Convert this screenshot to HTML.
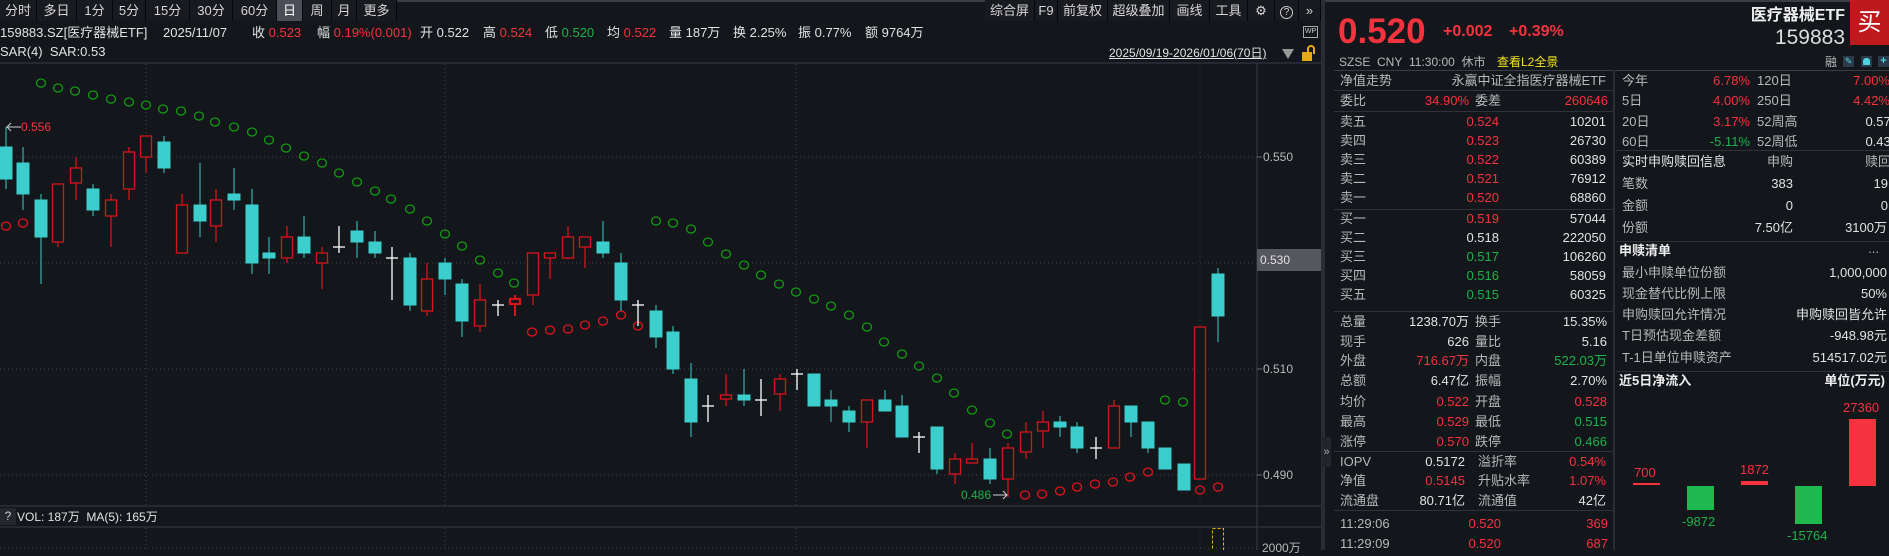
<!DOCTYPE html>
<html><head><meta charset="utf-8">
<style>
*{margin:0;padding:0;box-sizing:border-box}
body{width:1889px;height:550px;background:#13161b;overflow:hidden;position:relative;font-family:"Liberation Sans","Noto Sans CJK SC",sans-serif;color:#d8d8d8}
.p{position:absolute;white-space:nowrap;font-size:13px;line-height:16px}
.r{color:#f5333f}.g{color:#1fb24a}.w{color:#e2e2e2}.l{color:#b8b8b8}
.tb{position:absolute;top:0;height:21px;line-height:21px;font-size:13px;text-align:center;color:#d6d6d6;border-right:1px solid #05060a;background:#181a1f}
.hl{position:absolute;height:1px;background:#2f3238}
</style></head><body>
<svg width="1322" height="550" style="position:absolute;left:0;top:0">
<line x1="0" y1="1" x2="1322" y2="1" stroke="#3a3d44" stroke-width="2"/>
<line x1="0" y1="63" x2="1322" y2="63" stroke="#3a3d44"/>
<line x1="0" y1="506" x2="1322" y2="506" stroke="#3a3d44"/>
<line x1="0" y1="527" x2="1322" y2="527" stroke="#3a3d44"/>
<line x1="1257" y1="63" x2="1257" y2="550" stroke="#3a3d44"/>
<g stroke="#3c3f46" stroke-dasharray="1,3">
<line x1="0" y1="157" x2="1257" y2="157"/><line x1="0" y1="263" x2="1257" y2="263"/>
<line x1="0" y1="369" x2="1257" y2="369"/><line x1="0" y1="475" x2="1257" y2="475"/>
<line x1="0" y1="548" x2="1257" y2="548"/>
<line x1="146" y1="64" x2="146" y2="506"/><line x1="445" y1="64" x2="445" y2="506"/>
<line x1="796" y1="64" x2="796" y2="506"/><line x1="1200" y1="64" x2="1200" y2="506"/>
<line x1="146" y1="528" x2="146" y2="550"/><line x1="445" y1="528" x2="445" y2="550"/>
<line x1="796" y1="528" x2="796" y2="550"/><line x1="1200" y1="528" x2="1200" y2="550"/>
</g>
<g stroke="#6a6d74"><line x1="1257" y1="157" x2="1262" y2="157"/><line x1="1257" y1="369" x2="1262" y2="369"/><line x1="1257" y1="475" x2="1262" y2="475"/></g>
<g fill="none" stroke="#139a13" stroke-width="1.3">
<ellipse cx="41" cy="83" rx="4.5" ry="4"/><ellipse cx="58" cy="88" rx="4.5" ry="4"/><ellipse cx="75" cy="91" rx="4.5" ry="4"/><ellipse cx="93" cy="95" rx="4.5" ry="4"/><ellipse cx="111" cy="99" rx="4.5" ry="4"/><ellipse cx="129" cy="102" rx="4.5" ry="4"/><ellipse cx="146" cy="105" rx="4.5" ry="4"/><ellipse cx="163" cy="109" rx="4.5" ry="4"/><ellipse cx="181" cy="111" rx="4.5" ry="4"/><ellipse cx="199" cy="116" rx="4.5" ry="4"/><ellipse cx="215" cy="122" rx="4.5" ry="4"/><ellipse cx="234" cy="127" rx="4.5" ry="4"/><ellipse cx="252" cy="132" rx="4.5" ry="4"/><ellipse cx="269" cy="140" rx="4.5" ry="4"/><ellipse cx="286" cy="148" rx="4.5" ry="4"/><ellipse cx="304" cy="156" rx="4.5" ry="4"/><ellipse cx="322" cy="163" rx="4.5" ry="4"/><ellipse cx="339" cy="173" rx="4.5" ry="4"/><ellipse cx="357" cy="182" rx="4.5" ry="4"/><ellipse cx="375" cy="191" rx="4.5" ry="4"/><ellipse cx="391" cy="199" rx="4.5" ry="4"/><ellipse cx="410" cy="209" rx="4.5" ry="4"/><ellipse cx="427" cy="221" rx="4.5" ry="4"/><ellipse cx="445" cy="234" rx="4.5" ry="4"/><ellipse cx="462" cy="246" rx="4.5" ry="4"/><ellipse cx="480" cy="260" rx="4.5" ry="4"/><ellipse cx="498" cy="273" rx="4.5" ry="4"/><ellipse cx="514" cy="283" rx="4.5" ry="4"/>
<ellipse cx="656" cy="221" rx="4.5" ry="4"/><ellipse cx="673" cy="223" rx="4.5" ry="4"/><ellipse cx="691" cy="229" rx="4.5" ry="4"/><ellipse cx="708" cy="242" rx="4.5" ry="4"/><ellipse cx="726" cy="254" rx="4.5" ry="4"/><ellipse cx="744" cy="265" rx="4.5" ry="4"/><ellipse cx="761" cy="275" rx="4.5" ry="4"/><ellipse cx="779" cy="284" rx="4.5" ry="4"/><ellipse cx="796" cy="292" rx="4.5" ry="4"/><ellipse cx="814" cy="299" rx="4.5" ry="4"/><ellipse cx="831" cy="306" rx="4.5" ry="4"/><ellipse cx="849" cy="315" rx="4.5" ry="4"/><ellipse cx="867" cy="327" rx="4.5" ry="4"/><ellipse cx="884" cy="342" rx="4.5" ry="4"/><ellipse cx="902" cy="354" rx="4.5" ry="4"/><ellipse cx="919" cy="366" rx="4.5" ry="4"/><ellipse cx="937" cy="378" rx="4.5" ry="4"/><ellipse cx="954" cy="393" rx="4.5" ry="4"/><ellipse cx="972" cy="410" rx="4.5" ry="4"/><ellipse cx="990" cy="423" rx="4.5" ry="4"/><ellipse cx="1007" cy="434" rx="4.5" ry="4"/>
<ellipse cx="1165" cy="400" rx="4.5" ry="4"/><ellipse cx="1183" cy="402" rx="4.5" ry="4"/>
</g>
<g fill="none" stroke="#e0141e" stroke-width="1.3">
<ellipse cx="6" cy="226" rx="4.5" ry="4"/><ellipse cx="23" cy="223" rx="4.5" ry="4"/>
<ellipse cx="532" cy="332" rx="4.5" ry="4"/><ellipse cx="550" cy="330" rx="4.5" ry="4"/><ellipse cx="568" cy="329" rx="4.5" ry="4"/><ellipse cx="585" cy="325" rx="4.5" ry="4"/><ellipse cx="603" cy="321" rx="4.5" ry="4"/><ellipse cx="621" cy="315" rx="4.5" ry="4"/><ellipse cx="638" cy="326" rx="4.5" ry="4"/>
<ellipse cx="1025" cy="495" rx="4.5" ry="4"/><ellipse cx="1042" cy="494" rx="4.5" ry="4"/><ellipse cx="1060" cy="491" rx="4.5" ry="4"/><ellipse cx="1077" cy="487" rx="4.5" ry="4"/><ellipse cx="1095" cy="484" rx="4.5" ry="4"/><ellipse cx="1113" cy="482" rx="4.5" ry="4"/><ellipse cx="1130" cy="477" rx="4.5" ry="4"/><ellipse cx="1148" cy="472" rx="4.5" ry="4"/>
<ellipse cx="1200" cy="490" rx="4.5" ry="4"/><ellipse cx="1218" cy="487" rx="4.5" ry="4"/>
</g>
<g stroke="#3ccdcd" fill="#3ccdcd" stroke-width="1">
<line x1="6" y1="127" x2="6" y2="189"/><rect x="0" y="147" width="12" height="32"/>
<line x1="23" y1="147" x2="23" y2="210"/><rect x="17" y="163" width="12" height="31"/>
<line x1="41" y1="194" x2="41" y2="284"/><rect x="35" y="200" width="12" height="37"/>
<line x1="93" y1="184" x2="93" y2="216"/><rect x="87" y="189" width="12" height="21"/>
<line x1="164" y1="136" x2="164" y2="173"/><rect x="158" y="142" width="12" height="26"/>
<line x1="200" y1="163" x2="200" y2="237"/><rect x="194" y="205" width="12" height="16"/>
<line x1="234" y1="168" x2="234" y2="210"/><rect x="228" y="194" width="12" height="6"/>
<line x1="252" y1="189" x2="252" y2="274"/><rect x="246" y="205" width="12" height="58"/>
<line x1="269" y1="237" x2="269" y2="274"/><rect x="263" y="253" width="12" height="5"/>
<line x1="304" y1="216" x2="304" y2="258"/><rect x="298" y="237" width="12" height="16"/>
<line x1="357" y1="221" x2="357" y2="258"/><rect x="351" y="231" width="12" height="11"/>
<line x1="375" y1="231" x2="375" y2="258"/><rect x="369" y="242" width="12" height="11"/>
<line x1="410" y1="253" x2="410" y2="311"/><rect x="404" y="258" width="12" height="47"/>
<line x1="445" y1="258" x2="445" y2="295"/><rect x="439" y="263" width="12" height="16"/>
<line x1="462" y1="279" x2="462" y2="337"/><rect x="456" y="284" width="12" height="37"/>
<line x1="603" y1="221" x2="603" y2="258"/><rect x="597" y="242" width="12" height="11"/>
<line x1="621" y1="253" x2="621" y2="311"/><rect x="615" y="263" width="12" height="37"/>
<line x1="656" y1="305" x2="656" y2="348"/><rect x="650" y="311" width="12" height="26"/>
<line x1="673" y1="326" x2="673" y2="374"/><rect x="667" y="332" width="12" height="37"/>
<line x1="691" y1="363" x2="691" y2="437"/><rect x="685" y="379" width="12" height="43"/>
<line x1="744" y1="369" x2="744" y2="406"/><rect x="738" y="395" width="12" height="5"/>
<line x1="814" y1="374" x2="814" y2="406"/><rect x="808" y="374" width="12" height="32"/>
<line x1="831" y1="390" x2="831" y2="422"/><rect x="825" y="400" width="12" height="6"/>
<line x1="849" y1="406" x2="849" y2="432"/><rect x="843" y="411" width="12" height="11"/>
<line x1="885" y1="390" x2="885" y2="411"/><rect x="879" y="400" width="12" height="11"/>
<line x1="902" y1="395" x2="902" y2="437"/><rect x="896" y="406" width="12" height="31"/>
<line x1="937" y1="427" x2="937" y2="474"/><rect x="931" y="427" width="12" height="42"/>
<line x1="990" y1="448" x2="990" y2="484"/><rect x="984" y="459" width="12" height="20"/>
<line x1="1060" y1="416" x2="1060" y2="437"/><rect x="1054" y="422" width="12" height="5"/>
<line x1="1077" y1="422" x2="1077" y2="453"/><rect x="1071" y="427" width="12" height="21"/>
<line x1="1131" y1="406" x2="1131" y2="437"/><rect x="1125" y="406" width="12" height="16"/>
<line x1="1148" y1="422" x2="1148" y2="453"/><rect x="1142" y="422" width="12" height="26"/>
<rect x="1159" y="448" width="12" height="21"/>
<rect x="1178" y="464" width="12" height="26"/>
<line x1="1218" y1="268" x2="1218" y2="342"/><rect x="1212" y="274" width="12" height="42"/>
</g>
<g stroke="#d8141c" fill="#13161b" stroke-width="1.3">
<line x1="58" y1="184" x2="58" y2="247"/><rect x="52.5" y="184" width="11" height="58"/>
<line x1="76" y1="157" x2="76" y2="200"/><rect x="70.5" y="168" width="11" height="15"/>
<line x1="111" y1="194" x2="111" y2="247"/><rect x="105.5" y="200" width="11" height="16"/>
<line x1="129" y1="147" x2="129" y2="200"/><rect x="123.5" y="152" width="11" height="37"/>
<line x1="146" y1="136" x2="146" y2="173"/><rect x="140.5" y="136" width="11" height="21"/>
<line x1="182" y1="194" x2="182" y2="253"/><rect x="176.5" y="205" width="11" height="48"/>
<line x1="216" y1="189" x2="216" y2="242"/><rect x="210.5" y="200" width="11" height="26"/>
<line x1="287" y1="226" x2="287" y2="263"/><rect x="281.5" y="237" width="11" height="21"/>
<line x1="322" y1="247" x2="322" y2="289"/><rect x="316.5" y="253" width="11" height="10"/>
<line x1="427" y1="263" x2="427" y2="316"/><rect x="421.5" y="279" width="11" height="32"/>
<line x1="480" y1="284" x2="480" y2="332"/><rect x="474.5" y="300" width="11" height="26"/>
<line x1="515" y1="295" x2="515" y2="316" stroke-width="2"/><rect x="510" y="299" width="10" height="5" stroke-width="2.2"/>
<line x1="533" y1="253" x2="533" y2="305"/><rect x="527.5" y="253" width="11" height="42"/>
<line x1="550" y1="253" x2="550" y2="279"/><rect x="544.5" y="253" width="11" height="5"/>
<line x1="568" y1="226" x2="568" y2="258"/><rect x="562.5" y="237" width="11" height="21"/>
<line x1="585" y1="237" x2="585" y2="268"/><rect x="579.5" y="237" width="11" height="10"/>
<line x1="726" y1="374" x2="726" y2="406"/><rect x="720.5" y="395" width="11" height="4"/>
<line x1="780" y1="374" x2="780" y2="411"/><rect x="774.5" y="379" width="11" height="15"/>
<line x1="867" y1="400" x2="867" y2="448"/><rect x="861.5" y="400" width="11" height="22"/>
<line x1="955" y1="453" x2="955" y2="484"/><rect x="949.5" y="459" width="11" height="15"/>
<line x1="972" y1="443" x2="972" y2="463"/><rect x="966.5" y="459" width="11" height="4"/>
<line x1="1008" y1="443" x2="1008" y2="497"/><rect x="1002.5" y="448" width="11" height="31"/>
<line x1="1026" y1="422" x2="1026" y2="459"/><rect x="1020.5" y="432" width="11" height="20"/>
<line x1="1043" y1="411" x2="1043" y2="448"/><rect x="1037.5" y="422" width="11" height="9"/>
<line x1="1114" y1="400" x2="1114" y2="448"/><rect x="1108.5" y="406" width="11" height="42"/>
<rect x="1194.5" y="327" width="11" height="152"/>
</g>
<g stroke="#ffffff" stroke-width="1.3">
<line x1="339" y1="226" x2="339" y2="253"/><line x1="333" y1="247" x2="345" y2="247"/>
<line x1="392" y1="247" x2="392" y2="300"/><line x1="386" y1="258" x2="398" y2="258"/>
<line x1="498" y1="300" x2="498" y2="316"/><line x1="492" y1="305" x2="504" y2="305"/>
<line x1="638" y1="300" x2="638" y2="326"/><line x1="632" y1="305" x2="644" y2="305"/>
<line x1="708" y1="395" x2="708" y2="422"/><line x1="702" y1="406" x2="714" y2="406"/>
<line x1="761" y1="379" x2="761" y2="416"/><line x1="755" y1="400" x2="767" y2="400"/>
<line x1="797" y1="369" x2="797" y2="390"/><line x1="791" y1="374" x2="803" y2="374"/>
<line x1="919" y1="432" x2="919" y2="453"/><line x1="913" y1="437" x2="925" y2="437"/>
<line x1="1096" y1="437" x2="1096" y2="459"/><line x1="1090" y1="448" x2="1102" y2="448"/>
</g>
<line x1="7" y1="127" x2="21" y2="127" stroke="#cfcfcf"/><path d="M11 123 L7 127 L11 131" fill="none" stroke="#cfcfcf"/>
<line x1="993" y1="495" x2="1007" y2="495" stroke="#cfcfcf"/><path d="M1003 491 L1007 495 L1003 499" fill="none" stroke="#cfcfcf"/>
<rect x="1212.5" y="528.5" width="11" height="24" fill="none" stroke="#e6b422" stroke-dasharray="3,2"/>
<rect x="1257" y="249" width="64" height="22" fill="#55565e"/>
</svg>
<div class="p r" style="left:21px;top:119px;font-size:12px">0.556</div>
<div class="p g" style="left:961px;top:487px;font-size:12px">0.486</div>
<div class="p l" style="left:1263px;top:149px;font-size:12px">0.550</div>
<div class="p w" style="left:1260px;top:252px;font-size:12px">0.530</div>
<div class="p l" style="left:1263px;top:361px;font-size:12px">0.510</div>
<div class="p l" style="left:1263px;top:467px;font-size:12px">0.490</div>
<div class="p l" style="left:1262px;top:540px;font-size:12px">2000万</div>
<div style="position:absolute;left:0;top:508px;width:16px;height:17px;background:#25272d;color:#ccc;font-size:12px;text-align:center;line-height:17px">?</div>
<div class="p w" style="left:17px;top:509px;font-size:12px">VOL: 187万&nbsp; MA(5): 165万</div>

<div class="tb" style="left:0;width:37px">分时</div>
<div class="tb" style="left:37px;width:40px">多日</div>
<div class="tb" style="left:77px;width:36px">1分</div>
<div class="tb" style="left:113px;width:33px">5分</div>
<div class="tb" style="left:146px;width:44px">15分</div>
<div class="tb" style="left:190px;width:43px">30分</div>
<div class="tb" style="left:233px;width:44px">60分</div>
<div class="tb" style="left:277px;width:26px;background:#4b4e57;color:#fff">日</div>
<div class="tb" style="left:303px;width:29px">周</div>
<div class="tb" style="left:332px;width:25px">月</div>
<div class="tb" style="left:357px;width:40px">更多</div>
<div class="tb" style="left:985px;width:50px">综合屏</div>
<div class="tb" style="left:1035px;width:23px">F9</div>
<div class="tb" style="left:1058px;width:50px">前复权</div>
<div class="tb" style="left:1108px;width:62px">超级叠加</div>
<div class="tb" style="left:1170px;width:40px">画线</div>
<div class="tb" style="left:1210px;width:38px">工具</div>
<div class="tb" style="left:1248px;width:27px">⚙</div>
<div class="tb" style="left:1275px;width:24px"><span style="display:inline-block;width:13px;height:13px;border:1.3px solid #ccc;border-radius:50%;font-size:10px;line-height:11px">?</span></div>
<div class="tb" style="left:1299px;width:22px">»</div>

<div class="p w" style="top:25px;left:0">159883.SZ[医疗器械ETF]</div>
<div class="p w" style="top:25px;left:163px">2025/11/07</div>
<div class="p w" style="top:25px;left:252px">收 <span class="r">0.523</span></div>
<div class="p w" style="top:25px;left:317px">幅 <span class="r">0.19%(0.001)</span></div>
<div class="p w" style="top:25px;left:420px">开 0.522</div>
<div class="p w" style="top:25px;left:483px">高 <span class="r">0.524</span></div>
<div class="p w" style="top:25px;left:545px">低 <span class="g">0.520</span></div>
<div class="p w" style="top:25px;left:607px">均 <span class="r">0.522</span></div>
<div class="p w" style="top:25px;left:669px">量 187万</div>
<div class="p w" style="top:25px;left:733px">换 2.25%</div>
<div class="p w" style="top:25px;left:798px">振 0.77%</div>
<div class="p w" style="top:25px;left:865px">额 9764万</div>
<div style="position:absolute;left:1303px;top:26px;width:15px;height:12px;border:1px solid #aaa;font-size:7px;line-height:10px;color:#ccc;text-align:center">WP</div>
<div class="p w" style="top:44px;left:0">SAR(4)&nbsp; SAR:0.53</div>
<div class="p w" style="top:45px;left:1109px;font-size:12px;text-decoration:underline">2025/09/19-2026/01/06(70日)</div>
<div style="position:absolute;left:1282px;top:49px;width:0;height:0;border-left:6px solid transparent;border-right:6px solid transparent;border-top:10px solid #999"></div>
<div style="position:absolute;left:1302px;top:52px;width:10px;height:9px;background:#e6a817"></div>
<div style="position:absolute;left:1307px;top:45px;width:8px;height:9px;border:2px solid #e6a817;border-bottom:none;border-radius:4px 4px 0 0"></div>

<div style="position:absolute;left:1321px;top:0;width:4px;height:550px;background:#2a2c31"></div>
<div style="position:absolute;left:1325px;top:0;width:564px;height:2px;background:#3a3d44"></div>
<div style="position:absolute;left:1322px;top:437px;width:9px;height:30px;background:#23252a;color:#aaa;font-size:11px;line-height:30px;text-align:center">»</div>
<div class="p r" style="left:1338px;top:12px;font-size:35px;line-height:40px;font-weight:bold">0.520</div>
<div class="p r" style="left:1443px;top:22px;font-size:16px;line-height:20px;font-weight:bold">+0.002</div>
<div class="p r" style="left:1509px;top:22px;font-size:16px;line-height:20px;font-weight:bold">+0.39%</div>
<div class="p" style="right:44px;top:6px;font-size:16px;line-height:20px;font-weight:bold;color:#eee">医疗器械ETF</div>
<div class="p" style="right:44px;top:26px;font-size:21px;line-height:24px;color:#ddd">159883</div>
<div style="position:absolute;left:1850px;top:0;width:39px;height:45px;background:#c0191d;color:#fff;font-size:24px;line-height:45px;text-align:center">买</div>
<div class="p l" style="left:1339px;top:54px;font-size:12px">SZSE&nbsp; CNY&nbsp; 11:30:00&nbsp; 休市</div>
<div class="p" style="left:1497px;top:54px;font-size:12px;color:#f2e51a">查看L2全景</div>
<div class="p l" style="left:1825px;top:54px;font-size:12px">融</div>
<div style="position:absolute;left:1843px;top:56px;width:11px;height:11px;background:#2a3a48;color:#4fd3e0;font-size:9px;line-height:11px;text-align:center">✎</div>
<div style="position:absolute;left:1861px;top:56px;width:11px;height:11px;background:#2a3a48"><div style="margin:2px 2px;width:7px;height:7px;background:#4fd3e0;border-radius:3px 3px 0 0"></div></div>
<div style="position:absolute;left:1878px;top:56px;width:11px;height:11px;background:#2a3a48;color:#4fd3e0;font-size:11px;line-height:11px;text-align:center;font-weight:bold">+</div>
<div class="hl" style="left:1334px;top:70px;width:555px;background:#3a3d44"></div>
<div style="position:absolute;left:1613px;top:70px;width:2px;height:480px;background:#2a2c31"></div>

<div class="hl" style="left:1334px;top:90px;width:279px"></div>
<div class="hl" style="left:1334px;top:111px;width:279px"></div>
<div class="hl" style="left:1334px;top:209px;width:279px"></div>
<div class="hl" style="left:1334px;top:311px;width:279px"></div>
<div class="hl" style="left:1334px;top:451px;width:279px"></div>
<div class="hl" style="left:1334px;top:510px;width:279px"></div>

<div class="p l" style="left:1340px;top:73px">净值走势</div><div class="p l" style="right:283px;top:73px">永赢中证全指医疗器械ETF</div>
<div class="p l" style="left:1340px;top:93px">委比</div><div class="p r" style="right:420px;top:93px">34.90%</div><div class="p l" style="left:1475px;top:93px">委差</div><div class="p r" style="right:281px;top:93px">260646</div>

<div class="p l" style="left:1340px;top:114px">卖五</div><div class="p r" style="right:390px;top:114px">0.524</div><div class="p w" style="right:283px;top:114px">10201</div>
<div class="p l" style="left:1340px;top:133px">卖四</div><div class="p r" style="right:390px;top:133px">0.523</div><div class="p w" style="right:283px;top:133px">26730</div>
<div class="p l" style="left:1340px;top:152px">卖三</div><div class="p r" style="right:390px;top:152px">0.522</div><div class="p w" style="right:283px;top:152px">60389</div>
<div class="p l" style="left:1340px;top:171px">卖二</div><div class="p r" style="right:390px;top:171px">0.521</div><div class="p w" style="right:283px;top:171px">76912</div>
<div class="p l" style="left:1340px;top:190px">卖一</div><div class="p r" style="right:390px;top:190px">0.520</div><div class="p w" style="right:283px;top:190px">68860</div>
<div class="p l" style="left:1340px;top:211px">买一</div><div class="p r" style="right:390px;top:211px">0.519</div><div class="p w" style="right:283px;top:211px">57044</div>
<div class="p l" style="left:1340px;top:230px">买二</div><div class="p w" style="right:390px;top:230px">0.518</div><div class="p w" style="right:283px;top:230px">222050</div>
<div class="p l" style="left:1340px;top:249px">买三</div><div class="p g" style="right:390px;top:249px">0.517</div><div class="p w" style="right:283px;top:249px">106260</div>
<div class="p l" style="left:1340px;top:268px">买四</div><div class="p g" style="right:390px;top:268px">0.516</div><div class="p w" style="right:283px;top:268px">58059</div>
<div class="p l" style="left:1340px;top:287px">买五</div><div class="p g" style="right:390px;top:287px">0.515</div><div class="p w" style="right:283px;top:287px">60325</div>

<div class="p l" style="left:1340px;top:314px">总量</div><div class="p w" style="right:420px;top:314px">1238.70万</div><div class="p l" style="left:1475px;top:314px">换手</div><div class="p w" style="right:282px;top:314px">15.35%</div>
<div class="p l" style="left:1340px;top:334px">现手</div><div class="p w" style="right:420px;top:334px">626</div><div class="p l" style="left:1475px;top:334px">量比</div><div class="p w" style="right:282px;top:334px">5.16</div>
<div class="p l" style="left:1340px;top:353px">外盘</div><div class="p r" style="right:420px;top:353px">716.67万</div><div class="p l" style="left:1475px;top:353px">内盘</div><div class="p g" style="right:282px;top:353px">522.03万</div>
<div class="p l" style="left:1340px;top:373px">总额</div><div class="p w" style="right:420px;top:373px">6.47亿</div><div class="p l" style="left:1475px;top:373px">振幅</div><div class="p w" style="right:282px;top:373px">2.70%</div>
<div class="p l" style="left:1340px;top:394px">均价</div><div class="p r" style="right:420px;top:394px">0.522</div><div class="p l" style="left:1475px;top:394px">开盘</div><div class="p r" style="right:282px;top:394px">0.528</div>
<div class="p l" style="left:1340px;top:414px">最高</div><div class="p r" style="right:420px;top:414px">0.529</div><div class="p l" style="left:1475px;top:414px">最低</div><div class="p g" style="right:282px;top:414px">0.515</div>
<div class="p l" style="left:1340px;top:434px">涨停</div><div class="p r" style="right:420px;top:434px">0.570</div><div class="p l" style="left:1475px;top:434px">跌停</div><div class="p g" style="right:282px;top:434px">0.466</div>

<div class="p l" style="left:1340px;top:454px">IOPV</div><div class="p w" style="right:424px;top:454px">0.5172</div><div class="p l" style="left:1478px;top:454px">溢折率</div><div class="p r" style="right:283px;top:454px">0.54%</div>
<div class="p l" style="left:1340px;top:473px">净值</div><div class="p r" style="right:424px;top:473px">0.5145</div><div class="p l" style="left:1478px;top:473px">升贴水率</div><div class="p r" style="right:283px;top:473px">1.07%</div>
<div class="p l" style="left:1340px;top:493px">流通盘</div><div class="p w" style="right:424px;top:493px">80.71亿</div><div class="p l" style="left:1478px;top:493px">流通值</div><div class="p w" style="right:283px;top:493px">42亿</div>

<div class="p l" style="left:1340px;top:516px">11:29:06</div><div class="p r" style="right:388px;top:516px">0.520</div><div class="p r" style="right:281px;top:516px">369</div>
<div class="p l" style="left:1340px;top:536px">11:29:09</div><div class="p r" style="right:388px;top:536px">0.520</div><div class="p r" style="right:281px;top:536px">687</div>

<div class="p l" style="left:1622px;top:73px">今年</div><div class="p r" style="right:139px;top:73px">6.78%</div><div class="p l" style="left:1757px;top:73px">120日</div><div class="p r" style="right:-1px;top:73px">7.00%</div>
<div class="p l" style="left:1622px;top:93px">5日</div><div class="p r" style="right:139px;top:93px">4.00%</div><div class="p l" style="left:1757px;top:93px">250日</div><div class="p r" style="right:-1px;top:93px">4.42%</div>
<div class="p l" style="left:1622px;top:114px">20日</div><div class="p r" style="right:139px;top:114px">3.17%</div><div class="p l" style="left:1757px;top:114px">52周高</div><div class="p w" style="right:-9px;top:114px">0.570</div>
<div class="p l" style="left:1622px;top:134px">60日</div><div class="p g" style="right:139px;top:134px">-5.11%</div><div class="p l" style="left:1757px;top:134px">52周低</div><div class="p w" style="right:-9px;top:134px">0.430</div>
<div class="hl" style="left:1616px;top:150px;width:273px"></div>
<div class="p w" style="left:1622px;top:154px">实时申购赎回信息</div><div class="p l" style="right:96px;top:154px">申购</div><div class="p l" style="right:-2px;top:154px">赎回</div>
<div class="p l" style="left:1622px;top:176px">笔数</div><div class="p w" style="right:96px;top:176px">383</div><div class="p w" style="right:1px;top:176px">19</div>
<div class="p l" style="left:1622px;top:198px">金额</div><div class="p w" style="right:96px;top:198px">0</div><div class="p w" style="right:1px;top:198px">0</div>
<div class="p l" style="left:1622px;top:220px">份额</div><div class="p w" style="right:96px;top:220px">7.50亿</div><div class="p w" style="right:2px;top:220px">3100万</div>
<div class="hl" style="left:1616px;top:241px;width:273px"></div>
<div class="p" style="left:1619px;top:243px;font-weight:bold;color:#eee">申赎清单</div><div class="p l" style="right:10px;top:241px">...</div>
<div class="p l" style="left:1622px;top:265px">最小申赎单位份额</div><div class="p w" style="right:2px;top:265px">1,000,000</div>
<div class="p l" style="left:1622px;top:286px">现金替代比例上限</div><div class="p w" style="right:2px;top:286px">50%</div>
<div class="p l" style="left:1622px;top:307px">申购赎回允许情况</div><div class="p w" style="right:2px;top:307px">申购赎回皆允许</div>
<div class="p l" style="left:1622px;top:328px">T日预估现金差额</div><div class="p w" style="right:2px;top:328px">-948.98元</div>
<div class="p l" style="left:1622px;top:350px">T-1日单位申赎资产</div><div class="p w" style="right:2px;top:350px">514517.02元</div>
<div class="hl" style="left:1616px;top:371px;width:273px"></div>
<div class="p" style="left:1619px;top:373px;font-weight:bold;color:#eee">近5日净流入</div><div class="p" style="right:4px;top:373px;font-weight:bold;color:#eee">单位(万元)</div>

<div style="position:absolute;left:1633px;top:483px;width:27px;height:2px;background:#f5333f"></div>
<div style="position:absolute;left:1687px;top:486px;width:27px;height:24px;background:#1db94e"></div>
<div style="position:absolute;left:1741px;top:481px;width:27px;height:4px;background:#f5333f"></div>
<div style="position:absolute;left:1795px;top:486px;width:27px;height:38px;background:#1db94e"></div>
<div style="position:absolute;left:1849px;top:419px;width:27px;height:67px;background:#f5333f"></div>
<div class="p r" style="left:1634px;top:465px">700</div>
<div class="p g" style="left:1682px;top:514px">-9872</div>
<div class="p r" style="left:1740px;top:462px">1872</div>
<div class="p g" style="left:1787px;top:528px">-15764</div>
<div class="p r" style="left:1843px;top:400px">27360</div>
</body></html>
